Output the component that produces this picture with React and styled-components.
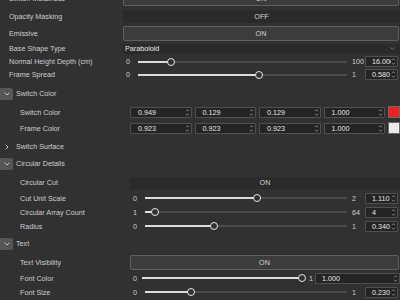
import React from 'react';
import styled, { createGlobalStyle } from 'styled-components';
import { ChevronDown, ChevronRight } from 'lucide-react';

const GlobalStyle = createGlobalStyle`
  html, body {
    margin: 0;
    padding: 0;
    background: #313131;
    overflow: hidden;
  }
  body {
    font-family: "Liberation Sans", Arial, sans-serif;
    font-size: 7.2px;
    color: #cdcdcd;
  }
`;

function Spinner() {
  return (
    <SpinnerBox>
      <svg width="5" height="9" viewBox="0 0 5 9">
        <path d="M1 3.2 L2.5 1.6 L4 3.2 M1 5.8 L2.5 7.4 L4 5.8" fill="none" stroke="#8a8a8a" strokeWidth="0.9" />
      </svg>
    </SpinnerBox>
  );
}

function Slider({ min, max, value, minLabel, maxLabel, text, wide }) {
  const pct = ((value - min) / (max - min)) * 100;
  return (
    <SliderWrap>
      <MinLabel $wide={wide}>{minLabel}</MinLabel>
      <Track $wide={wide}>
        <Fill style={{ width: pct + '%' }} />
        <Thumb style={{ left: pct + '%' }} />
      </Track>
      <MaxLabel $wide={wide}>{maxLabel}</MaxLabel>
      <NumberBox $wide={wide}>
        {text}
        <Spinner />
      </NumberBox>
    </SliderWrap>
  );
}

function PropRow({ label, nested, h, children }) {
  return (
    <Row $nested={nested} $h={h}>
      <Label $nested={nested}>{label}</Label>
      <Value>{children}</Value>
    </Row>
  );
}

function Section({ title, open, children }) {
  return (
    <div>
      <SectionHead>
        <Caret $open={open}>
          {open ? (
            <ChevronDown size={8} strokeWidth={2.6} color="#d8d8d8" />
          ) : (
            <ChevronRight size={8} strokeWidth={2.6} color="#d8d8d8" />
          )}
        </Caret>
        <SectionTitle>{title}</SectionTitle>
      </SectionHead>
      {open && <SectionBody>{children}</SectionBody>}
    </div>
  );
}

function ColorRow({ label, values, swatch }) {
  return (
    <PropRow label={label} nested h={16}>
      <ColorGrid>
        {values.map((v, i) => (
          <ColorField key={i}>
            {v}
            <Spinner />
          </ColorField>
        ))}
        <Swatch $color={swatch} />
      </ColorGrid>
    </PropRow>
  );
}

export default function App() {
  return (
    <>
      <GlobalStyle />
      <Panel>
        <PropRow label="Switch Metalness" h={19}>
          <Toggle $raised>ON</Toggle>
        </PropRow>
        <PropRow label="Opacity Masking" h={17}>
          <Toggle>OFF</Toggle>
        </PropRow>
        <PropRow label="Emissive" h={17}>
          <Toggle $raised>ON</Toggle>
        </PropRow>
        <PropRow label="Base Shape Type" h={13}>
          <Select>
            Paraboloid
            <ChevronDown size={7} strokeWidth={2} color="#a8a8a8" />
          </Select>
        </PropRow>
        <PropRow label="Normal Height Depth (cm)" h={13}>
          <Slider min={0} max={100} value={16} minLabel="0" maxLabel="100" text="16.000" />
        </PropRow>
        <PropRow label="Frame Spread" h={13}>
          <Slider min={0} max={1} value={0.58} minLabel="0" maxLabel="1" text="0.580" />
        </PropRow>

        <Sections>
          <Section title="Switch Color" open>
            <ColorRow label="Switch Color" values={['0.949', '0.129', '0.129', '1.000']} swatch="#f22121" />
            <ColorRow label="Frame Color" values={['0.923', '0.923', '0.923', '1.000']} swatch="#ebebeb" />
          </Section>
          <Section title="Switch Surface" />
          <Section title="Circular Details" open>
            <PropRow label="Circular Cut" nested h={17}>
              <Toggle $tall>ON</Toggle>
            </PropRow>
            <PropRow label="Cut Unit Scale" nested h={14}>
              <Slider min={0} max={2} value={1.11} minLabel="0" maxLabel="2" text="1.110" />
            </PropRow>
            <PropRow label="Circular Array Count" nested h={14}>
              <Slider min={1} max={64} value={4} minLabel="1" maxLabel="64" text="4" />
            </PropRow>
            <PropRow label="Radius" nested h={14}>
              <Slider min={0} max={1} value={0.34} minLabel="0" maxLabel="1" text="0.340" />
            </PropRow>
          </Section>
          <Section title="Text" open>
            <PropRow label="Text Visibility" nested h={17}>
              <Toggle $raised>ON</Toggle>
            </PropRow>
            <PropRow label="Font Color" nested h={14}>
              <Slider min={0} max={1} value={1} minLabel="0" maxLabel="1" text="1.000" wide />
            </PropRow>
            <PropRow label="Font Size" nested h={14}>
              <Slider min={0} max={1} value={0.23} minLabel="0" maxLabel="1" text="0.230" />
            </PropRow>
          </Section>
        </Sections>
      </Panel>
    </>
  );
}

const Panel = styled.div`
  width: 400px;
  margin-top: -11px;
  display: flex;
  flex-direction: column;
`;

const Row = styled.div`
  display: flex;
  align-items: center;
  height: ${(p) => p.$h}px;
  padding-left: ${(p) => (p.$nested ? 20 : 9)}px;
`;

const Label = styled.div`
  width: ${(p) => (p.$nested ? 110 : 114)}px;
  flex: none;
  white-space: nowrap;
`;

const Value = styled.div`
  flex: 1;
  min-width: 0;
  display: flex;
  align-items: center;
`;

const Toggle = styled.div`
  flex: 1;
  box-sizing: border-box;
  height: ${(p) => (p.$raised ? 15 : p.$tall ? 12 : 13)}px;
  margin-right: ${(p) => (p.$raised ? 1 : 0)}px;
  display: flex;
  align-items: center;
  justify-content: center;
  color: #d4d4d4;
  background: ${(p) => (p.$raised ? '#3c3c3c' : '#2a2a2a')};
  border: ${(p) => (p.$raised ? '1px solid #606060' : 'none')};
  border-radius: ${(p) => (p.$raised ? 2 : 0)}px;
`;

const Select = styled.div`
  flex: 1;
  height: 10px;
  display: flex;
  align-items: center;
  justify-content: space-between;
  padding: 0 4px 0 2px;
  background: #2a2a2a;
  color: #e6e6e6;
`;

const SliderWrap = styled.div`
  flex: 1;
  display: flex;
  align-items: center;
`;

const MinLabel = styled.span`
  width: ${(p) => (p.$wide ? 9 : 12)}px;
  padding-left: 3px;
  flex: none;
`;

const Track = styled.div`
  position: relative;
  height: 2px;
  background: #4c4c4c;
  flex: ${(p) => (p.$wide ? '0 0 160px' : '1')};
  margin-right: ${(p) => (p.$wide ? 7 : 5)}px;
`;

const Fill = styled.div`
  height: 100%;
  background: #dcdcdc;
`;

const Thumb = styled.div`
  position: absolute;
  top: 50%;
  width: 8px;
  height: 8px;
  box-sizing: border-box;
  margin: -4px 0 0 -4px;
  border-radius: 50%;
  border: 1.5px solid #e6e6e6;
  background: #313131;
`;

const MaxLabel = styled.span`
  width: ${(p) => (p.$wide ? 6 : 13)}px;
  flex: none;
  white-space: nowrap;
`;

const NumberBox = styled.div`
  position: relative;
  box-sizing: border-box;
  height: 11px;
  flex: ${(p) => (p.$wide ? '1' : '0 0 33px')};
  margin-right: ${(p) => (p.$wide ? 0 : 2)}px;
  padding-left: 6px;
  display: flex;
  align-items: center;
  overflow: hidden;
  white-space: nowrap;
  background: #242424;
  border: 1px solid #505050;
  border-radius: 1px;
  color: #e4e4e4;
`;

const SpinnerBox = styled.span`
  position: absolute;
  right: 0;
  top: 0;
  bottom: 0;
  width: 6px;
  display: flex;
  align-items: center;
  background: #242424;
`;

const Sections = styled.div`
  margin-top: 4px;
`;

const SectionHead = styled.div`
  display: flex;
  align-items: center;
  height: 17px;
`;

const Caret = styled.span`
  width: 13px;
  height: 12px;
  display: flex;
  align-items: center;
  justify-content: center;
  background: ${(p) => (p.$open ? '#565656' : 'transparent')};
  border-radius: 0 2px 2px 0;
`;

const SectionTitle = styled.span`
  margin-left: 3px;
`;

const SectionBody = styled.div`
  padding: 2px 0;
`;

const ColorGrid = styled.div`
  flex: 1;
  display: grid;
  grid-template-columns: repeat(4, 1fr) 12px;
  gap: 3px;
  align-items: center;
`;

const ColorField = styled(NumberBox)`
  flex: none;
  margin: 0;
  padding-left: 7px;
`;

const Swatch = styled.div`
  width: 12px;
  height: 12px;
  box-sizing: border-box;
  background: ${(p) => p.$color};
  border: 1px solid #6a6a6a;
`;
